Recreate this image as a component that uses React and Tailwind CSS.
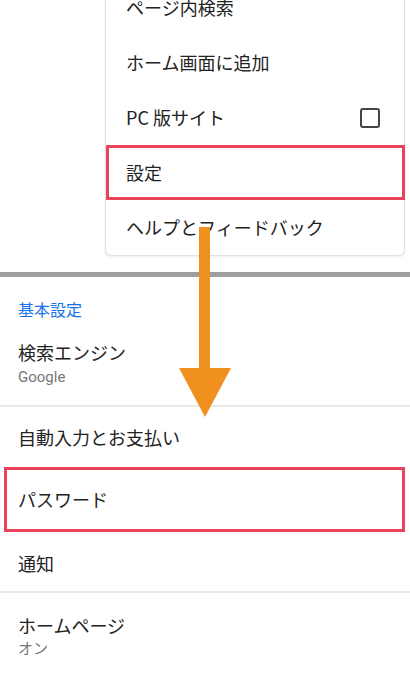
const menuItems = [
  { label: "ページ内検索" },
  { label: "ホーム画面に追加" },
  { label: "PC 版サイト", checkbox: true },
  { label: "設定", highlight: true },
  { label: "ヘルプとフィードバック" },
];

const font = { fontFamily: '"Noto Sans CJK JP", "Roboto", sans-serif' };

function Arrow() {
  return (
    <svg
      className="absolute left-[179px] top-[227px]"
      width="52"
      height="191"
      viewBox="0 0 52 191"
    >
      <rect x="20" y="0" width="11" height="142" fill="#f0901f" />
      <polygon points="0,141 52,141 26,190" fill="#f0901f" />
    </svg>
  );
}

export default function App() {
  return (
    <div
      className="relative w-[410px] h-[700px] overflow-hidden bg-white text-[#222]"
      style={font}
    >
      {/* ===== overflow menu ===== */}
      <div className="h-[272px] flex flex-col">
        <div className="ml-[105px] w-[300px] -mt-[20px] bg-white border border-t-0 border-[#e2e2e2] rounded-b-[6px] shadow-[0_1px_3px_rgba(0,0,0,0.08)]">
          {menuItems.map((item) => (
            <div
              key={item.label}
              className={`h-[55px] flex items-center justify-between text-[18px] ${
                item.highlight
                  ? "border-[3px] border-[#e8425c] pl-[17px] -mr-[1px]"
                  : "pl-[20px]"
              }`}
            >
              <span>{item.label}</span>
              {item.checkbox && (
                <span className="w-[20px] h-[20px] mr-[24px] border-2 border-[#444] rounded-[3px]" />
              )}
            </div>
          ))}
        </div>
      </div>

      <div className="h-[5px] bg-[#9f9f9f]" />

      {/* ===== settings ===== */}
      <div className="pl-[18px] pt-[20px] text-[16px] leading-[24px] text-[#1a73e8]">
        基本設定
      </div>
      <div className="pl-[18px] pt-[19px] pb-[17px] border-b-2 border-[#e8e8e8]">
        <div className="text-[18px] leading-[24px]">検索エンジン</div>
        <div className="mt-[2px] text-[15px] leading-[22px] text-[#777]" style={{ fontFamily: '"Roboto", "Noto Sans CJK JP", sans-serif' }}>
          Google
        </div>
      </div>
      <div className="h-[60px] flex items-center pl-[18px] text-[18px]">
        自動入力とお支払い
      </div>
      <div className="h-[65px] ml-[4px] mr-[5px] border-[3px] border-[#e8425c] flex items-center pl-[11px] text-[18px]">
        パスワード
      </div>
      <div className="h-[61px] flex items-center pl-[18px] pt-[4px] text-[18px] border-b-2 border-[#e8e8e8]">
        通知
      </div>
      <div className="pl-[18px] pt-[20px]">
        <div className="text-[18px] leading-[24px]">ホームページ</div>
        <div className="text-[15px] leading-[22px] text-[#777]">オン</div>
      </div>

      <Arrow />
    </div>
  );
}
